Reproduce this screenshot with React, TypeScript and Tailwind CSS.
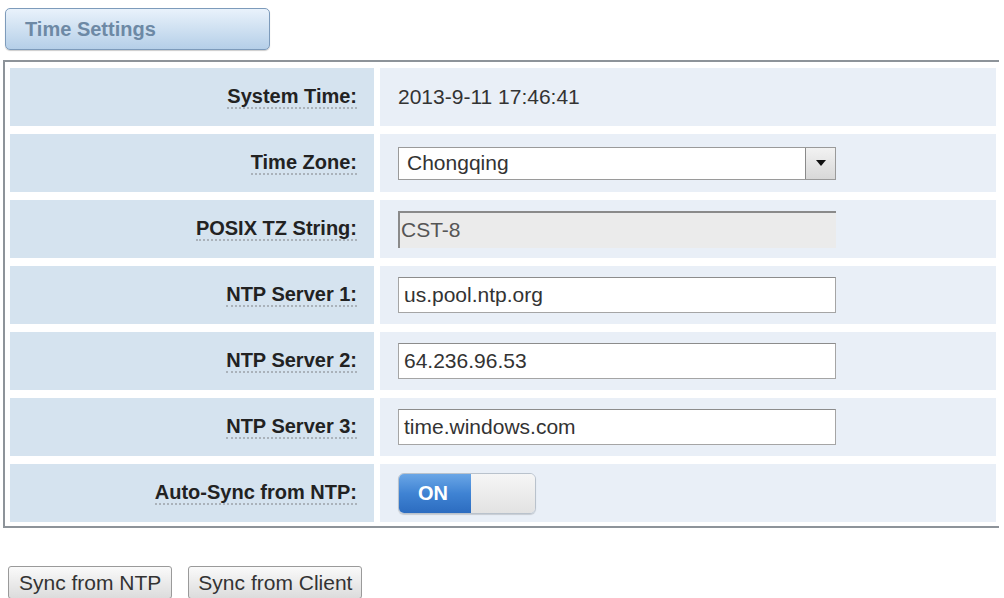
const rows: { label: string; kind: string; value: string }[] = [
  { label: 'System Time:', kind: 'text', value: '2013-9-11 17:46:41' },
  { label: 'Time Zone:', kind: 'select', value: 'Chongqing' },
  { label: 'POSIX TZ String:', kind: 'disabled', value: 'CST-8' },
  { label: 'NTP Server 1:', kind: 'input', value: 'us.pool.ntp.org' },
  { label: 'NTP Server 2:', kind: 'input', value: '64.236.96.53' },
  { label: 'NTP Server 3:', kind: 'input', value: 'time.windows.com' },
  { label: 'Auto-Sync from NTP:', kind: 'toggle', value: 'ON' },
];

const Field = ({ kind, value }: { kind: string; value: string }) => {
  if (kind === 'text') {
    return <span className="text-[21px] text-[#333]">{value}</span>;
  }
  if (kind === 'select') {
    return (
      <div className="flex w-[438px] h-[33px] border border-[#9a9a9a] bg-white">
        <div className="flex-1 flex items-center pl-[8px] text-[21px] text-[#333]">{value}</div>
        <div className="w-[30px] flex items-center justify-center border-l border-[#8a8a8a] bg-gradient-to-b from-[#f2f2f2] to-[#d8d8d8]">
          <svg width="10" height="6" viewBox="0 0 10 6">
            <path d="M0 0 L10 0 L5 6 Z" fill="#111" />
          </svg>
        </div>
      </div>
    );
  }
  if (kind === 'disabled') {
    return (
      <div className="flex items-center w-[438px] h-[37px] border-t-2 border-l-2 border-[#8a8a8a] bg-[#ebebeb] pl-[1px] text-[21px] text-[#555]">
        {value}
      </div>
    );
  }
  if (kind === 'input') {
    return (
      <div className="flex items-center w-[438px] h-[36px] border border-[#a5a5a5] border-t-[#8c8c8c] bg-white pl-[5px] text-[21px] text-[#333]">
        {value}
      </div>
    );
  }
  return (
    <div className="flex w-[138px] h-[41px] rounded-[6px] overflow-hidden border border-[#b9c2cc] shadow-[0_1px_1px_rgba(0,0,0,0.15)]">
      <div className="w-[72px] flex items-center pl-[19px] bg-gradient-to-b from-[#6aa6e6] via-[#3f83d3] to-[#2c6cc0] text-white text-[20px] font-bold">
        {value}
      </div>
      <div className="flex-1 bg-gradient-to-b from-[#f6f6f6] to-[#e2e2e2]" />
    </div>
  );
};

const App = () => {
  return (
    <div className="w-[1004px] h-[598px] bg-white overflow-hidden font-['Liberation_Sans',Arial,sans-serif]">
      <div className="ml-[5px] mt-[8px] w-[265px] h-[42px] rounded-[5px] border border-[#7d9bbb] bg-gradient-to-b from-[#e9f2fb] to-[#b5cfe8] flex items-center pl-[19px] shadow-[0_1px_1px_rgba(0,0,0,0.2)]">
        <span className="text-[20px] font-bold text-[#6d89a5]">Time Settings</span>
      </div>

      <div className="ml-[3px] mt-[10px] w-[996px] border-2 border-r-0 border-[#8d9399] pl-[5px] pt-[6px] pb-[4px]">
        <div className="grid grid-cols-[364px_616px] gap-x-[6px] gap-y-[8px]">
          {rows.map((r) => (
            <div key={r.label} className="contents">
              <div className="h-[58px] bg-[#d5e3ef] flex items-center justify-end pr-[17px]">
                <span className="text-[20px] font-bold text-[#222] border-b-2 border-dotted border-[#aab2ba] leading-[22px]">
                  {r.label}
                </span>
              </div>
              <div className="h-[58px] bg-[#e9eff7] flex items-center pl-[18px]">
                <Field kind={r.kind} value={r.value} />
              </div>
            </div>
          ))}
        </div>
      </div>

      <div className="flex gap-[16px] ml-[8px] mt-[38px]">
        <button className="h-[33px] px-[10px] rounded-[3px] border border-[#9a9a9a] bg-gradient-to-b from-[#fafafa] to-[#dcdcdc] text-[21px] text-[#333]">
          Sync from NTP
        </button>
        <button className="h-[33px] px-[9px] rounded-[3px] border border-[#9a9a9a] bg-gradient-to-b from-[#fafafa] to-[#dcdcdc] text-[21px] text-[#333]">
          Sync from Client
        </button>
      </div>
    </div>
  );
};

export default App;
